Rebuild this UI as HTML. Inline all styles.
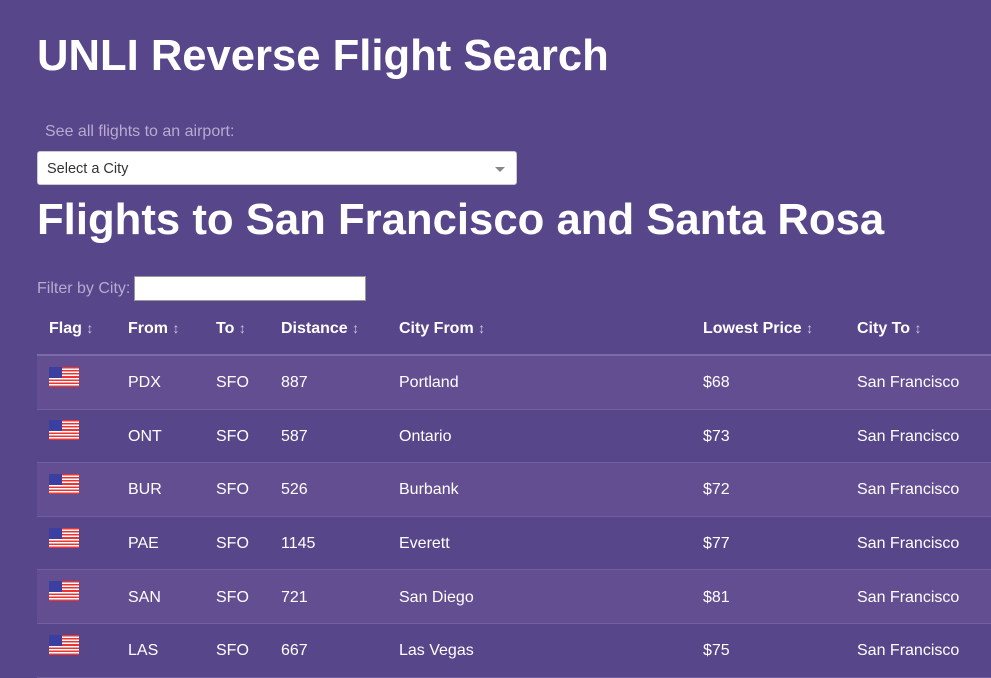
<!DOCTYPE html>
<html><head><style>
body{margin:0;width:991px;height:678px;overflow:hidden;background:#58468a;font-family:"Liberation Sans",sans-serif;color:#fff;position:relative}
.t1{position:absolute;left:37px;top:32px;font-size:43.6px;font-weight:bold;margin:0}
.lbl{position:absolute;left:45px;top:123px;font-size:16px;color:#b7abd0}
.sel{position:absolute;left:37px;top:151px;width:480px;height:34px;background:#fff;border:1px solid #ccc;border-radius:3px;color:#333;font-size:14.5px;line-height:34px;box-sizing:border-box;padding-left:9px}
.sel:after{content:"";position:absolute;right:11px;top:15px;border:5px solid transparent;border-top:5px solid #888}
.t2{position:absolute;left:37px;top:195px;font-size:43.7px;font-weight:bold;margin:0}
.flt{position:absolute;left:37px;top:280px;font-size:16px;color:#b7abd0}
.inp{position:absolute;left:134px;top:276px;width:232px;height:25px;background:#fff;border:1px solid #999;box-sizing:border-box}
table{position:absolute;left:37px;top:304px;width:954px;border-collapse:collapse;font-size:16px}
th{text-align:left;height:50px;padding:0 0 0 12px;font-weight:bold;border-bottom:2px solid #7a6aa6}
th span{color:#c8bfe0;font-weight:normal;font-size:14px}
td{height:50.6px;padding:2px 0 0 12px;border-bottom:1px solid #7060a0}
tr.o td{background:#644e92}
.flag{display:inline-block;width:30px;height:20px;position:relative;top:-4px;background:repeating-linear-gradient(#e33 0 1.54px,#fff 1.54px 3.08px)}
.flag:before{content:"";position:absolute;left:0;top:0;width:13px;height:11px;background:#3b3fa0}
</style></head><body>
<h1 class="t1">UNLI Reverse Flight Search</h1>
<div class="lbl">See all flights to an airport:</div>
<div class="sel">Select a City</div>
<h1 class="t2">Flights to San Francisco and Santa Rosa</h1>
<div class="flt">Filter by City:</div><div class="inp"></div>
<table>
<tr><th style="width:67px">Flag <span>↕</span></th><th style="width:76px">From <span>↕</span></th><th style="width:53px">To <span>↕</span></th><th style="width:106px">Distance <span>↕</span></th><th style="width:292px">City From <span>↕</span></th><th style="width:142px">Lowest Price <span>↕</span></th><th>City To <span>↕</span></th></tr>
<tr class="o"><td><i class="flag"></i></td><td>PDX</td><td>SFO</td><td>887</td><td>Portland</td><td>$68</td><td>San Francisco</td></tr>
<tr><td><i class="flag"></i></td><td>ONT</td><td>SFO</td><td>587</td><td>Ontario</td><td>$73</td><td>San Francisco</td></tr>
<tr class="o"><td><i class="flag"></i></td><td>BUR</td><td>SFO</td><td>526</td><td>Burbank</td><td>$72</td><td>San Francisco</td></tr>
<tr><td><i class="flag"></i></td><td>PAE</td><td>SFO</td><td>1145</td><td>Everett</td><td>$77</td><td>San Francisco</td></tr>
<tr class="o"><td><i class="flag"></i></td><td>SAN</td><td>SFO</td><td>721</td><td>San Diego</td><td>$81</td><td>San Francisco</td></tr>
<tr><td><i class="flag"></i></td><td>LAS</td><td>SFO</td><td>667</td><td>Las Vegas</td><td>$75</td><td>San Francisco</td></tr>
</table>
</body></html>
